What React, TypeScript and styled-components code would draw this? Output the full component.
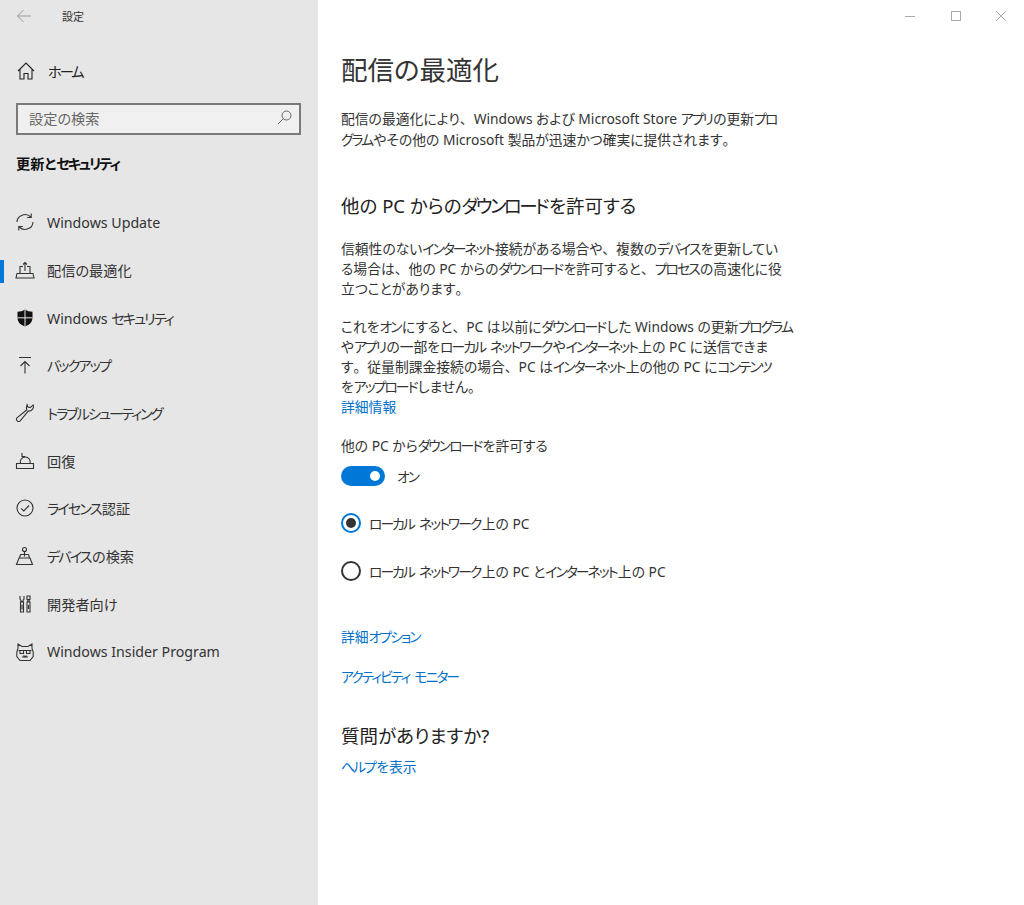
import React from "react";
import styled, { createGlobalStyle } from "styled-components";

const GlobalStyle = createGlobalStyle`
  html, body {
    margin: 0;
    padding: 0;
    background: #fff;
  }
  body {
    font-family: "Noto Sans", "Noto Sans CJK JP", sans-serif;
    font-feature-settings: "palt";
    color: #222;
  }
`;

const Kana = styled.span`
  letter-spacing: -0.14em;
  margin-right: 0.1em;
`;

const Punct = styled.span`
  font-feature-settings: normal;
`;

// the original font sets katakana much narrower than Noto, so squeeze those runs
const Jp = ({ text }: { text: string }) => (
  <>
    {text.split(/([\u30a0-\u30ff]+|[、。])/).map((part, i) =>
      /^[\u30a0-\u30ff]+$/.test(part) ? (
        <Kana key={i}>{part}</Kana>
      ) : /^[、。]$/.test(part) ? (
        <Punct key={i}>{part}</Punct>
      ) : (
        part
      )
    )}
  </>
);

const iconProps = {
  width: 20,
  height: 20,
  viewBox: "0 0 20 20",
  fill: "none",
  stroke: "#333",
  strokeWidth: 1.1,
};

const navItems = [
  {
    label: "Windows Update",
    icon: (
      <svg {...iconProps}>
        <path d="M2 10A8 7.500 0 0 1 15.800 5M18 10A8 7.500 0 0 1 4.200 15" />
        <path d="M16.200 1.500V5.500h-4M3.800 18.500V14.500h4" />
      </svg>
    ),
  },
  {
    label: "配信の最適化",
    active: true,
    icon: (
      <svg {...iconProps}>
        <path d="M5 13V6.500h3M12 6.500h3V13M2 13.500h16l1 4.500H1zM10 11V2.500M8 4.500l2-2 2 2" />
      </svg>
    ),
  },
  {
    label: "Windows セキュリティ",
    icon: (
      <svg width="20" height="20" viewBox="0 0 20 20">
        <path
          d="M10 1.500c2.300 1.500 4.700 2.200 7.500 2.300V9.500c0 4.500-3 7.500-7.500 9-4.500-1.500-7.500-4.500-7.500-9V3.800C5.300 3.700 7.700 3 10 1.500z"
          fill="#111"
        />
        <path d="M10 1.500v17M2.500 9.800h15" stroke="#e6e6e6" strokeWidth="1" />
      </svg>
    ),
  },
  {
    label: "バックアップ",
    icon: (
      <svg {...iconProps}>
        <path d="M4 2.500h12M10 18.500V6.500M5.500 11 10 6.500l4.500 4.500" />
      </svg>
    ),
  },
  {
    label: "トラブルシューティング",
    icon: (
      <svg {...iconProps}>
        <path d="M12.500 1.800a4.600 4.600 0 0 0-.6 5L2 14.800a2.200 2.200 0 0 0 3.200 3l8-9.700a4.700 4.700 0 0 0 5-6.200l-3 2.700-2.700-.7-.3-2.300z" />
      </svg>
    ),
  },
  {
    label: "回復",
    icon: (
      <svg {...iconProps}>
        <path d="M1.500 12.500h17v5h-17zM5.500 12.500a5 5 0 1 1 9.500 0M7 2v3.500h3.500" />
      </svg>
    ),
  },
  {
    label: "ライセンス認証",
    icon: (
      <svg {...iconProps}>
        <circle cx="10" cy="10" r="8" />
        <path d="M6 10.300l2.800 2.700 5.200-5.500" />
      </svg>
    ),
  },
  {
    label: "デバイスの検索",
    icon: (
      <svg {...iconProps}>
        <circle cx="9.500" cy="3.500" r="2" />
        <path d="M9.500 5.500v5M5.500 8.500h8M5.500 8.500 4.500 12M13.500 8.500l1 3.500M1.500 18.500h16L15 12H4z" />
      </svg>
    ),
  },
  {
    label: "開発者向け",
    icon: (
      <svg {...iconProps}>
        <path d="M5 2v3l1 1.500v1h2v-1L9 5V2M5.500 8h3v10h-3zM7 10.500v5" />
        <path d="M12 2h3v3.500h-3zM12.800 5.500V8M14.200 5.500V8M12 8h3v10h-3zM13.500 11v4" />
      </svg>
    ),
  },
  {
    label: "Windows Insider Program",
    icon: (
      <svg {...iconProps}>
        <path d="M3 6.500V2l4 2.500h6L17 2v4.500M3 6.500 1.800 10v4.500L5 18.500h10l3.200-4V10L17 6.500" />
        <path d="M3.500 8.500h13M5 8.500v3h3.500v-3M11.500 8.500v3H15v-3M7 15h6M8.500 13.500l1.500 1.500 1.500-1.500" />
      </svg>
    ),
  },
];

const intro = [
  "配信の最適化により、Windows および Microsoft Store アプリの更新プロ",
  "グラムやその他の Microsoft 製品が迅速かつ確実に提供されます。",
];

const reasons = [
  "信頼性のないインターネット接続がある場合や、複数のデバイスを更新してい",
  "る場合は、他の PC からのダウンロードを許可すると、プロセスの高速化に役",
  "立つことがあります。",
];

const details = [
  "これをオンにすると、PC は以前にダウンロードした Windows の更新プログラム",
  "やアプリの一部をローカル ネットワークやインターネット上の PC に送信できま",
  "す。従量制課金接続の場合、PC はインターネット上の他の PC にコンテンツ",
  "をアップロードしません。",
];

export default function App() {
  return (
    <>
      <GlobalStyle />
      <Page>
        <Sidebar>
          <TitleRow>
            <svg width="16" height="14" viewBox="0 0 16 14" fill="none" stroke="#999" strokeWidth="1">
              <path d="M15 7H1.500M7.500 1 1.500 7l6 6" />
            </svg>
            <AppName>設定</AppName>
          </TitleRow>
          <HomeRow>
            <IconSlot>
              <svg {...iconProps} stroke="#222">
                <path d="M2 10 10 2l8 8M4 8.500V18h4v-5.500h4V18h4V8.500" />
              </svg>
            </IconSlot>
            <span><Jp text="ホーム" /></span>
          </HomeRow>
          <SearchBox>
            <span>設定の検索</span>
            <svg width="15" height="15" viewBox="0 0 15 15" fill="none" stroke="#666" strokeWidth="1">
              <circle cx="9.500" cy="5.500" r="4.500" />
              <path d="M6.200 8.800 1 14" />
            </svg>
          </SearchBox>
          <SectionTitle><Jp text="更新とセキュリティ" /></SectionTitle>
          <NavList>
            {navItems.map((item) => (
              <NavRow key={item.label} $active={item.active}>
                <IconSlot>{item.icon}</IconSlot>
                <span><Jp text={item.label} /></span>
              </NavRow>
            ))}
          </NavList>
        </Sidebar>
        <Main>
          <WindowControls>
            <svg width="12" height="12" viewBox="0 0 12 12" stroke="#aaa" fill="none">
              <path d="M1 6.500h10" />
            </svg>
            <svg width="12" height="12" viewBox="0 0 12 12" stroke="#aaa" fill="none">
              <rect x="1.500" y="1.500" width="9" height="9" />
            </svg>
            <svg width="12" height="12" viewBox="0 0 12 12" stroke="#aaa" fill="none">
              <path d="M1 1l10 10M11 1 1 11" />
            </svg>
          </WindowControls>
          <Content>
            <PageTitle>配信の最適化</PageTitle>
            <Intro>
              {intro.map((line) => (
                <Line key={line}><Jp text={line} /></Line>
              ))}
            </Intro>
            <Heading><Jp text="他の PC からのダウンロードを許可する" /></Heading>
            <Body>
              {reasons.map((line) => (
                <Line key={line}><Jp text={line} /></Line>
              ))}
            </Body>
            <BodyNext>
              {details.map((line) => (
                <Line key={line}><Jp text={line} /></Line>
              ))}
            </BodyNext>
            <Link>詳細情報</Link>
            <ToggleLabel><Jp text="他の PC からダウンロードを許可する" /></ToggleLabel>
            <ToggleRow>
              <Toggle />
              <span><Jp text="オン" /></span>
            </ToggleRow>
            <RadioRow $first>
              <Radio $checked />
              <span><Jp text="ローカル ネットワーク上の PC" /></span>
            </RadioRow>
            <RadioRow>
              <Radio />
              <span><Jp text="ローカル ネットワーク上の PC とインターネット上の PC" /></span>
            </RadioRow>
            <LinkBlock $top={46}><Jp text="詳細オプション" /></LinkBlock>
            <LinkBlock $top={20}><Jp text="アクティビティ モニター" /></LinkBlock>
            <Question>質問がありますか?</Question>
            <HelpLink><Jp text="ヘルプを表示" /></HelpLink>
          </Content>
        </Main>
      </Page>
    </>
  );
}

const Page = styled.div`
  display: flex;
  width: 1024px;
  height: 905px;
  overflow: hidden;
`;

const Sidebar = styled.aside`
  width: 318px;
  flex: none;
  background: #e6e6e6;
  display: flex;
  flex-direction: column;
  font-size: 14.2px;
`;

const TitleRow = styled.div`
  height: 32px;
  display: flex;
  align-items: center;
  padding-left: 16px;
`;

const AppName = styled.span`
  margin-left: 30px;
  font-size: 11px;
  color: #333;
`;

const IconSlot = styled.span`
  width: 20px;
  height: 20px;
  flex: none;
  display: flex;
  align-items: center;
  justify-content: center;
`;

const HomeRow = styled.div`
  height: 48px;
  margin-top: 15px;
  display: flex;
  align-items: center;
  gap: 12px;
  padding-left: 16px;
  color: #222;
`;

const SearchBox = styled.div`
  box-sizing: border-box;
  width: 285px;
  height: 32px;
  margin: 8px 0 0 16px;
  padding: 0 7px 3px 11px;
  border: 2px solid #7a7a7a;
  background: #f0f0f0;
  display: flex;
  align-items: center;
  justify-content: space-between;
  color: #666;
`;

const SectionTitle = styled.h2`
  margin: 18px 0 0 16px;
  height: 22px;
  line-height: 22px;
  font-size: 14.2px;
  font-weight: 700;
  color: #111;
`;

const NavList = styled.nav`
  margin-top: 23.500px;
  display: flex;
  flex-direction: column;
`;

const NavRow = styled.div<{ $active?: boolean }>`
  position: relative;
  height: 47.700px;
  display: flex;
  align-items: center;
  gap: 12px;
  padding-left: 15px;
  color: #333;
  ${(p) =>
    p.$active &&
    `&::before {
      content: "";
      position: absolute;
      left: 0;
      top: 14px;
      width: 4px;
      height: 23px;
      background: #0078d7;
    }`}
`;

const Main = styled.main`
  flex: 1;
  display: flex;
  flex-direction: column;
  background: #fff;
`;

const WindowControls = styled.div`
  box-sizing: border-box;
  height: 32px;
  padding: 0 17px 1px 0;
  display: flex;
  justify-content: flex-end;
  align-items: center;
  gap: 33.500px;
`;

const Content = styled.div`
  padding: 20px 0 0 23px;
  font-size: 13.800px;
  color: #333;
`;

const Line = styled.span`
  display: block;
`;

const PageTitle = styled.h1`
  margin: 0;
  font-size: 26.500px;
  line-height: 36px;
  font-weight: 400;
  color: #333;
`;

const Intro = styled.p`
  margin: 20px 0 0;
  line-height: 21px;
  white-space: nowrap;
`;

const Heading = styled.h2`
  margin: 42px 0 0;
  font-size: 18.500px;
  line-height: 28px;
  font-weight: 400;
  color: #222;
`;

const Body = styled.p`
  margin: 19px 0 0;
  line-height: 20px;
  white-space: nowrap;
`;

const BodyNext = styled(Body)`
  margin-top: 18px;
`;

const Link = styled.div`
  color: #0071c9;
  line-height: 20px;
`;

const LinkBlock = styled(Link)<{ $top: number }>`
  margin-top: ${(p) => p.$top}px;
`;

const HelpLink = styled(Link)`
  margin-top: 7px;
`;

const ToggleLabel = styled.div`
  margin-top: 19px;
  line-height: 20px;
`;

const ToggleRow = styled.div`
  margin-top: 10px;
  height: 20px;
  display: flex;
  align-items: center;
  gap: 12px;
`;

const Toggle = styled.span`
  position: relative;
  width: 44px;
  height: 20px;
  border-radius: 10px;
  background: #0078d7;
  &::after {
    content: "";
    position: absolute;
    right: 5px;
    top: 5px;
    width: 10px;
    height: 10px;
    border-radius: 50%;
    background: #fff;
  }
`;

const RadioRow = styled.div<{ $first?: boolean }>`
  margin-top: ${(p) => (p.$first ? 27 : 28)}px;
  height: 20px;
  display: flex;
  align-items: center;
  gap: 8px;
`;

const Radio = styled.span<{ $checked?: boolean }>`
  box-sizing: border-box;
  width: 20px;
  height: 20px;
  border-radius: 50%;
  border: 2px solid ${(p) => (p.$checked ? "#0078d7" : "#333")};
  display: flex;
  align-items: center;
  justify-content: center;
  &::after {
    content: "";
    display: ${(p) => (p.$checked ? "block" : "none")};
    width: 10px;
    height: 10px;
    border-radius: 50%;
    background: #333;
  }
`;

const Question = styled.h2`
  margin: 35px 0 0;
  font-size: 18.500px;
  line-height: 28px;
  font-weight: 400;
  color: #222;
`;
